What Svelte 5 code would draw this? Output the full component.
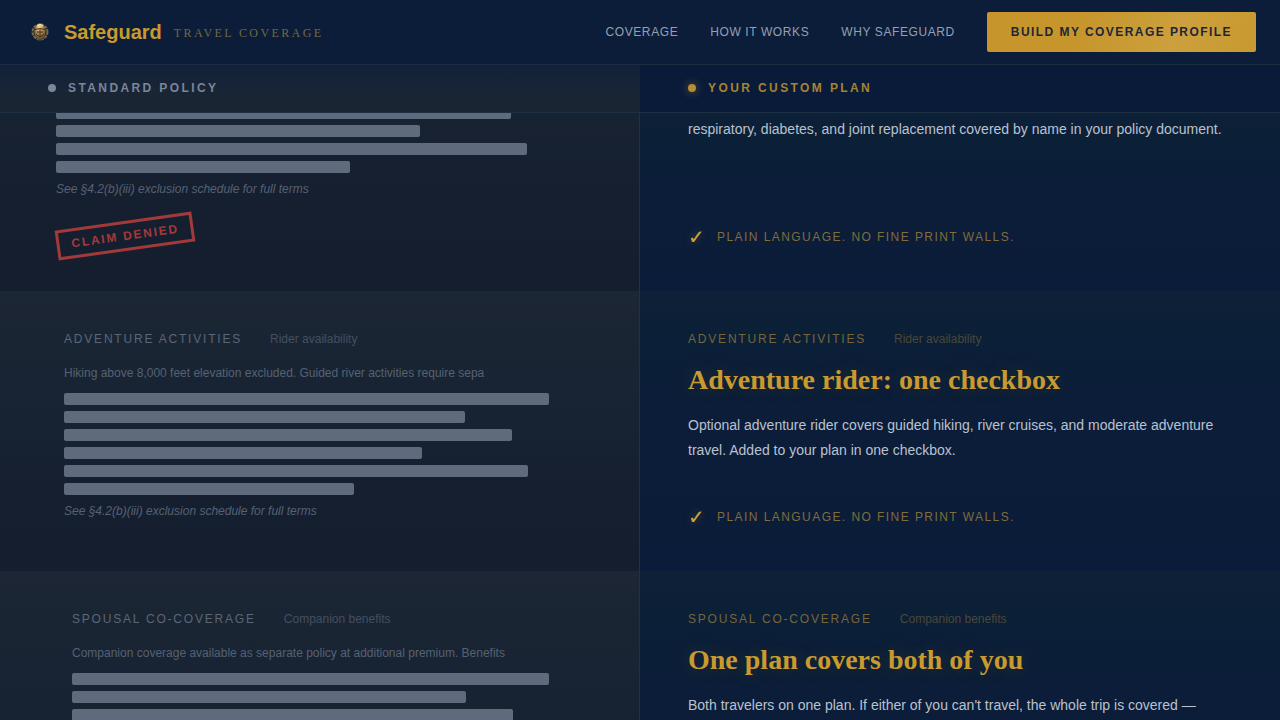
<script lang="ts">
	type Clause = {
		title: string;
		note: string;
		legal: string;
		headline: string;
		body: string;
		indent: number;
	};

	const nav = ['Coverage', 'How it works', 'Why Safeguard'];
	const redacted = [92, 76, 85, 68, 88, 55];
	const exclusion = 'See §4.2(b)(iii) exclusion schedule for full terms';

	const clauses: Clause[] = [
		{
			title: 'Adventure activities',
			note: 'Rider availability',
			legal: 'Hiking above 8,000 feet elevation excluded. Guided river activities require sepa',
			headline: 'Adventure rider: one checkbox',
			body: 'Optional adventure rider covers guided hiking, river cruises, and moderate adventure travel. Added to your plan in one checkbox.',
			indent: 64
		},
		{
			title: 'Spousal co-coverage',
			note: 'Companion benefits',
			legal: 'Companion coverage available as separate policy at additional premium. Benefits',
			headline: 'One plan covers both of you',
			body: "Both travelers on one plan. If either of you can't travel, the whole trip is covered —",
			indent: 72
		}
	];
</script>

{#snippet bars(widths: number[])}
	<div class="bars" aria-hidden="true">
		{#each widths as width}
			<div class="bar" style="width: {width}%"></div>
		{/each}
	</div>
{/snippet}

{#snippet promise()}
	<p class="promise"><span class="check">✓</span>Plain language. No fine print walls.</p>
{/snippet}

<div class="page">
	<header class="site-header">
		<a class="brand" href="#top">
			<svg class="crest" viewBox="0 0 32 32" aria-hidden="true">
				<defs>
					<radialGradient id="brass" cx="45%" cy="25%" r="75%">
						<stop offset="0" stop-color="#f6e3ae" />
						<stop offset="0.4" stop-color="#b8904e" />
						<stop offset="1" stop-color="#4b3a26" />
					</radialGradient>
				</defs>
				<circle cx="16" cy="16" r="7.5" fill="#2b2c2e" stroke="#75694f" stroke-width="2" stroke-dasharray="3 1" />
				<ellipse cx="16" cy="16" rx="5.5" ry="8.5" fill="url(#brass)" />
				<path d="M11 13.5q5-2 10 0M16 13v8M12 18q4 5 8 0M13 16h6" fill="none" stroke="#40301f" />
				<path d="M13 10q3-3 6 0" fill="none" stroke="#fff2c9" />
			</svg>
			<span class="name">Safeguard</span>
			<span class="tagline">Travel Coverage</span>
		</a>
		<nav>
			{#each nav as item}
				<a href="#top">{item}</a>
			{/each}
			<button type="button">Build my coverage profile</button>
		</nav>
	</header>

	<div class="column-heads">
		<h2 class="head-standard"><span class="dot"></span>Standard policy</h2>
		<h2 class="head-custom"><span class="dot"></span>Your custom plan</h2>
	</div>

	<main>
		<!-- Tail end of the clause scrolled under the column heads -->
		<section class="row scrolled">
			<div class="standard" style="padding-left: 56px">
				{@render bars(redacted.slice(2))}
				<p class="exclusion">{exclusion}</p>
				<span class="stamp">Claim denied</span>
			</div>
			<div class="custom">
				<p class="body">respiratory, diabetes, and joint replacement covered by name in your policy document.</p>
				{@render promise()}
			</div>
		</section>

		{#each clauses as clause}
			<section class="row">
				<div class="standard" style="padding-left: {clause.indent}px">
					<div class="label"><h3>{clause.title}</h3><span>{clause.note}</span></div>
					<p class="legal">{clause.legal}</p>
					{@render bars(redacted)}
					<p class="exclusion">{exclusion}</p>
				</div>
				<div class="custom">
					<div class="label"><h3>{clause.title}</h3><span>{clause.note}</span></div>
					<h4>{clause.headline}</h4>
					<p class="body">{clause.body}</p>
					{@render promise()}
				</div>
			</section>
		{/each}
	</main>
</div>

<style>
	:global(body) {
		margin: 0;
		background: #0b1d3a;
	}

	.page {
		--gold: #c99a2e;
		display: flex;
		flex-direction: column;
		height: 100vh;
		overflow: hidden;
		background: #0b1d3a;
		font-family: 'Liberation Sans', Arial, sans-serif;
		font-size: 12px;
		line-height: 16px;
	}

	.page * {
		box-sizing: border-box;
	}

	h2,
	h3,
	h4,
	p {
		margin: 0;
		font-size: inherit;
	}

	a {
		color: inherit;
		text-decoration: none;
	}

	.site-header {
		display: flex;
		flex: none;
		align-items: center;
		justify-content: space-between;
		height: 65px;
		padding: 0 24px;
		border-bottom: 1px solid #1c2d42;
		background: #0c1d39;
	}

	.brand {
		display: flex;
		align-items: center;
	}

	.crest {
		width: 32px;
		height: 32px;
		margin-right: 8px;
	}

	.name {
		margin-right: 12px;
		color: var(--gold);
		font-size: 20px;
		font-weight: 700;
	}

	.tagline {
		padding-top: 2px;
		color: #75683f;
		font-family: 'Liberation Serif', 'Times New Roman', serif;
		letter-spacing: 0.2em;
		text-transform: uppercase;
	}

	nav {
		display: flex;
		align-items: center;
		gap: 32px;
		color: #94a0b4;
		text-transform: uppercase;
	}

	nav a {
		letter-spacing: 0.05em;
	}

	button {
		height: 40px;
		padding: 0 24px;
		border: 0;
		border-radius: 2px;
		background: linear-gradient(110deg, #c6962c 35%, #cca03d 70%, #c7992f);
		color: #1c2638;
		font: 700 12px/16px 'Liberation Sans', Arial, sans-serif;
		letter-spacing: 0.12em;
		text-transform: uppercase;
	}

	.column-heads {
		display: grid;
		flex: none;
		grid-template-columns: 1fr 1fr;
		border-bottom: 1px solid #1d2f43;
	}

	h2 {
		display: flex;
		align-items: center;
		gap: 12px;
		padding: 15px 48px 16px;
		letter-spacing: 0.2em;
		text-transform: uppercase;
	}

	.head-standard {
		background: linear-gradient(#12213a, #1a2534 60%);
		color: #79869c;
	}

	.head-custom {
		background: #0a1b3a;
		color: #a6842f;
	}

	.dot {
		width: 8px;
		height: 8px;
		border-radius: 50%;
		background: #7a869b;
	}

	.head-custom .dot {
		background: #b78e31;
		box-shadow: 0 0 8px #c99a2e80;
	}

	.row {
		display: grid;
		grid-template-columns: 1fr 1fr;
		min-height: 280px;
	}

	.standard,
	.custom {
		display: flex;
		flex-direction: column;
		padding: 40px 48px;
	}

	.standard {
		border-right: 1px solid #233142;
		background: linear-gradient(#1c2635, #182433 35%, #161f30 70%, #151e2f);
		color: #566172;
	}

	.custom {
		background: linear-gradient(#0c2037, #0b1d39 50%, #0b1c3a);
	}

	.scrolled {
		height: 178px;
		min-height: 0;
	}

	.scrolled .standard {
		justify-content: flex-end;
		overflow: hidden;
		background-position: bottom;
		background-size: 100% 322px;
	}

	.scrolled .custom {
		padding-top: 4px;
	}

	.label {
		display: flex;
		gap: 28px;
		color: #5b6677;
	}

	h3 {
		font-weight: 400;
		letter-spacing: 0.15em;
		text-transform: uppercase;
	}

	.label span {
		color: #434f60;
	}

	.custom h3 {
		color: #76663c;
	}

	.custom .label span {
		color: #4a4838;
	}

	.legal {
		padding: 16px 0 10px;
		line-height: 20px;
		white-space: nowrap;
	}

	.bars {
		display: grid;
		flex: none;
		gap: 6px;
	}

	.bar {
		height: 12px;
		border-radius: 2px;
		background: #5f6b7d;
	}

	.exclusion {
		padding-top: 8px;
		font-style: italic;
	}

	.stamp {
		align-self: flex-start;
		margin-top: 24px;
		padding: 4px 12px;
		border: 3px solid #a33a3a;
		color: #a33a3a;
		font-weight: 700;
		letter-spacing: 0.15em;
		text-transform: uppercase;
		transform: rotate(-8deg);
	}

	h4 {
		padding: 16px 0;
		color: var(--gold);
		font: 700 28px/34px 'Liberation Serif', 'Times New Roman', serif;
		text-shadow: 0 0 20px #c99a2e33;
	}

	.body {
		color: #b9c2d0;
		font-size: 14px;
		line-height: 25px;
	}

	.promise {
		display: flex;
		align-items: center;
		gap: 12px;
		margin-top: auto;
		color: #7f6d3c;
		letter-spacing: 0.12em;
		line-height: 28px;
		text-transform: uppercase;
	}

	.check {
		color: #d2a63c;
		font-size: 20px;
		letter-spacing: 0;
		text-shadow: 0 0 8px #c99a2e66;
	}
</style>
